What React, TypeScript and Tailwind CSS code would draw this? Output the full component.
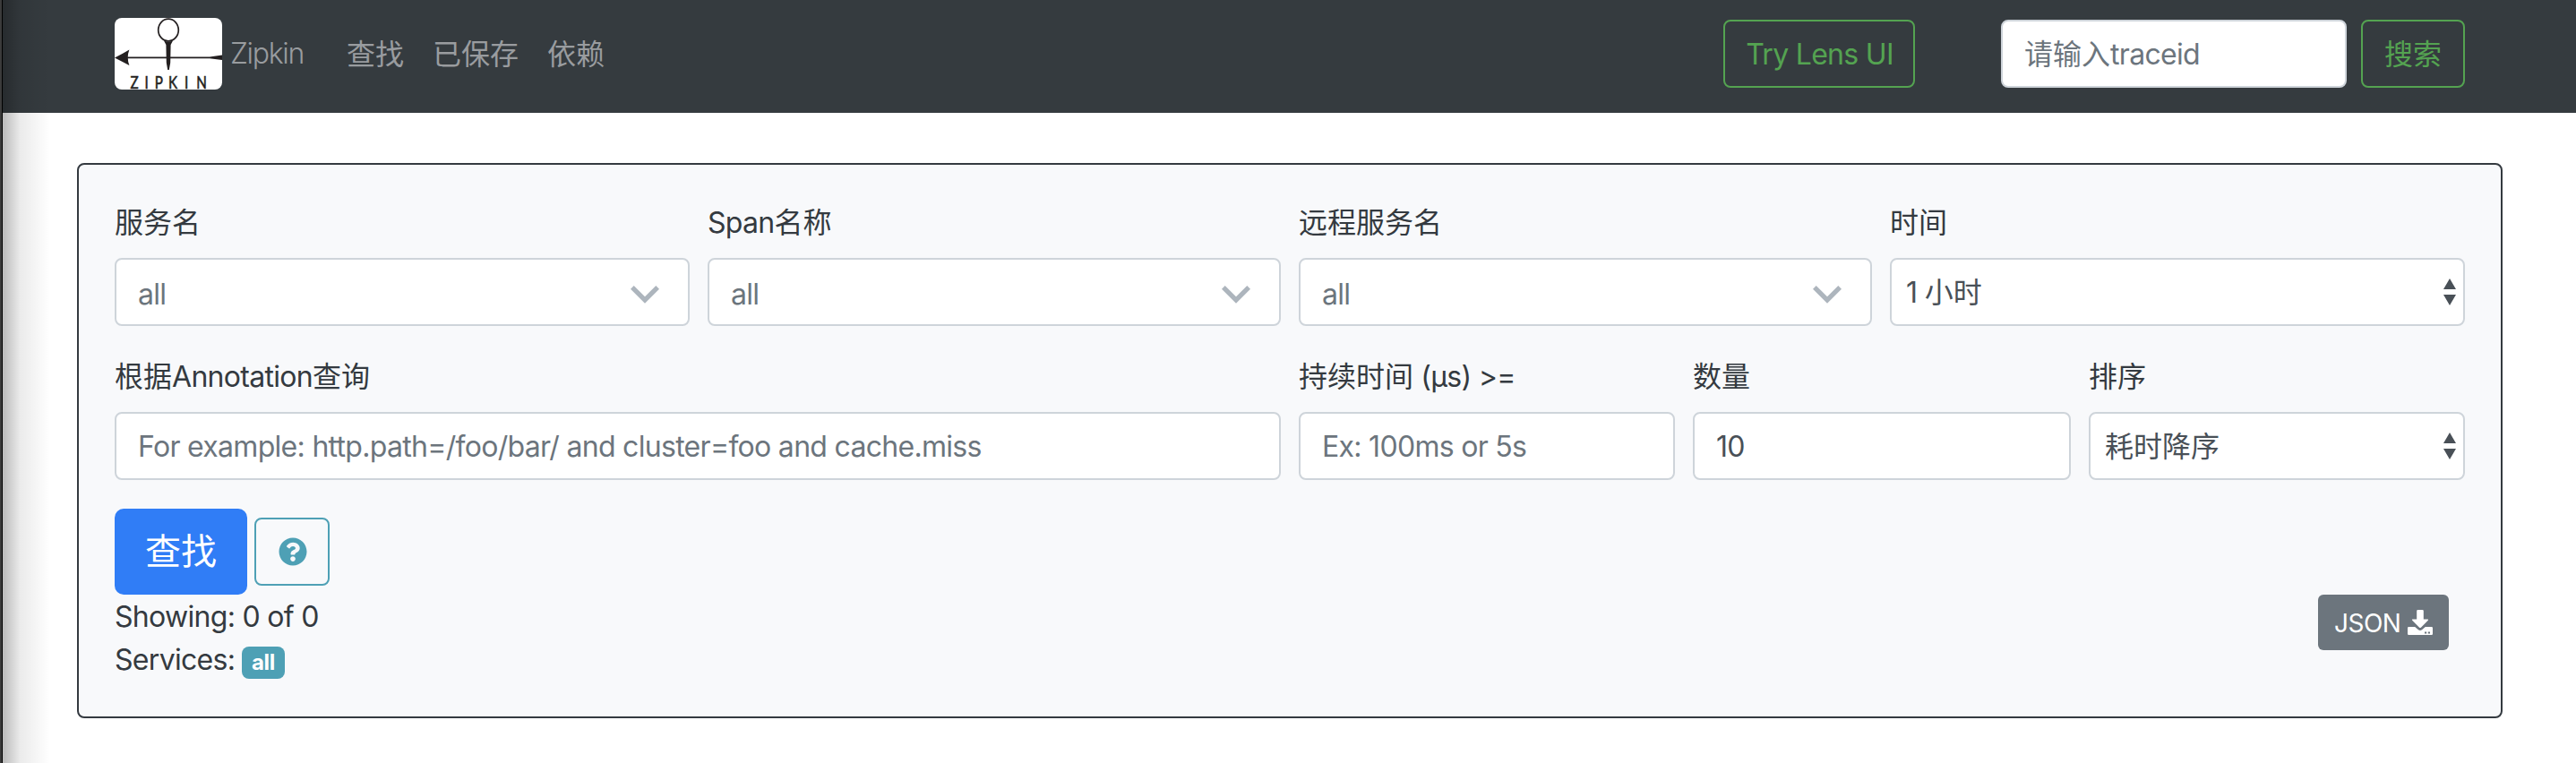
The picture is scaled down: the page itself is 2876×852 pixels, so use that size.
import { FaQuestionCircle } from "react-icons/fa";

/* Latin runs are set slightly tighter than the Chinese runs beside them. */
function T({ children }: { children: string }) {
  const runs = children.match(/[\u4e00-\u9fff]+|[^\u4e00-\u9fff]+/g) ?? [];
  return (
    <span className="whitespace-pre">
      {runs.map((run, i) => (
        <span key={i} className={/[\u4e00-\u9fff]/.test(run) ? "" : "tracking-[-0.7px]"}>
          {run}
        </span>
      ))}
    </span>
  );
}

function Label({ text }: { text: string }) {
  return (
    <label className="mb-4 block h-12 whitespace-nowrap pt-px">
      <T>{text}</T>
    </label>
  );
}

const box =
  "flex h-[76px] w-full items-center rounded-lg border-2 border-[#ced4da] bg-white";

function Chosen({ label }: { label: string }) {
  return (
    <div>
      <Label text={label} />
      <div className={`${box} justify-between pl-6 pr-8 text-[#6c757d]`}>
        <span className="pt-[6px]">
          <T>all</T>
        </span>
        <svg viewBox="0 0 32 20" className="mt-[5px] h-5 w-8" fill="#adb5bd">
          <path d="M0 3.700 3.700 0 16 12.300 28.300 0 32 3.700 16 19.700z" />
        </svg>
      </div>
    </div>
  );
}

function Select({ label, value }: { label: string; value: string }) {
  return (
    <div>
      <Label text={label} />
      <div className={`${box} justify-between pl-4 pr-2 text-[#495057]`}>
        <span className="pt-0.5">
          <T>{value}</T>
        </span>
        <svg viewBox="0 0 14 30" className="h-[30px] w-[14px]" fill="#495057">
          <path d="M0 12 7 0l7 12zM0 18h14L7 30z" />
        </svg>
      </div>
    </div>
  );
}

function Field({ label, value, filled }: { label: string; value: string; filled?: boolean }) {
  return (
    <div>
      <Label text={label} />
      <div className={`${box} px-6 pt-0.5 ${filled ? "text-[#495057]" : "text-[#6c757d]"}`}>
        <T>{value}</T>
      </div>
    </div>
  );
}

function Logo() {
  return (
    <svg viewBox="0 0 120 80" className="h-20 w-[120px] overflow-visible rounded-lg bg-white">
      <ellipse cx="60" cy="13.5" rx="11.3" ry="12.3" fill="none" stroke="#231f20" strokeWidth="1.7" />
      <path d="M55 25.5Q60 27.5 65 25.5L62.6 30 62.2 50 60.8 58H59.2L57.8 50 57.4 30Z" fill="#231f20" />
      <path d="M12 43.6H106L120 41.6V47L106 45.2H12Z" fill="#231f20" />
      <path d="M0 44.4Q9 40 16.4 35.5Q13 44 16.4 53Q9 49 0 44.4Z" fill="#231f20" />
      <text
        x="22 42 56 75 97.5 114"
        y="78.8"
        transform="scale(0.8 1)"
        className="font-['Lato',sans-serif] text-[19px]"
        fill="#231f20"
        stroke="#231f20"
        strokeWidth="0.6"
      >
        ZIPKIN
      </text>
    </svg>
  );
}

export default function App() {
  return (
    <div className="relative h-[852px] w-full overflow-hidden bg-white font-['Inter','Noto_Sans_CJK_SC',sans-serif] text-[32px] leading-[48px] text-[#343a40]">
      <nav className="flex h-[126px] items-start bg-[#353b3f] pl-32 pr-[124px] text-[#999c9f]">
        <div className="flex items-center pt-5">
          <Logo />
          <span className="ml-[9px] w-[130px] font-light tracking-[-1.3px]">Zipkin</span>
        </div>
        <div className="flex gap-8 pt-[37px]">
          <span>查找</span>
          <span>已保存</span>
          <span>依赖</span>
        </div>
        <div className="ml-auto flex pt-[22px]">
          <button className="mr-24 h-[76px] w-[214px] rounded-lg border-2 border-[#54a351] pl-px pt-0.5 text-[#54a351]">
            <T>Try Lens UI</T>
          </button>
          <div className="mr-4 flex h-[76px] w-[386px] items-center rounded-lg border-2 border-[#ced4da] bg-white pl-6 pt-0.5 text-[#6c757d]">
            <T>请输入traceid</T>
          </div>
          <button className="h-[76px] w-[116px] rounded-lg border-2 border-[#54a351] pt-0.5 text-[#54a351]">搜索</button>
        </div>
      </nav>

      <main className="ml-[86px] mr-[82px] mt-14 h-[620px] rounded-lg border-2 border-[#343a40] bg-[#f8f9fb] p-10">
        <div className="grid grid-cols-[642px_640px_640px_642px] gap-5">
          <Chosen label="服务名" />
          <Chosen label="Span名称" />
          <Chosen label="远程服务名" />
          <Select label="时间" value="1 小时" />
        </div>
        <div className="mt-8 grid grid-cols-[1302px_420px_422px_420px] gap-5">
          <Field label="根据Annotation查询" value="For example: http.path=/foo/bar/ and cluster=foo and cache.miss" />
          <Field label="持续时间 (μs) >=" value="Ex: 100ms or 5s" />
          <Field label="数量" value="10" filled />
          <Select label="排序" value="耗时降序" />
        </div>
        <div className="mt-8 flex items-center gap-2">
          <button className="h-24 w-[148px] rounded-[10px] bg-[#307df6] text-[40px] text-white">查找</button>
          <button className="flex h-[76px] w-[84px] items-center justify-center rounded-lg border-2 border-[#4ea0b5] pl-px text-[#4ea0b5]">
            <FaQuestionCircle size={32} />
          </button>
        </div>
        <div className="flex justify-between">
          <div className="pt-px">
            <div className="tracking-[-0.1px]">
              <T>Showing: 0 of 0</T>
            </div>
            <div className="flex">
              <span className="w-[142px]">
                <T>Services:</T>
              </span>
              <span className="mt-[9px] h-9 w-12 rounded-lg bg-[#4ea0b5] text-center text-2xl font-bold leading-[35px] tracking-[-0.3px] text-white">all</span>
            </div>
          </div>
          <button className="mr-[18px] flex h-[62px] w-[146px] items-center rounded-md bg-[#6c757d] pl-[18px] text-[28px] text-white">
            <span className="w-[82px] pt-0.5 text-left tracking-[-0.5px]">JSON</span>
            <svg viewBox="0 0 28 28" className="size-7" fill="currentColor">
              <path d="M11.5 0h5q1.3 0 1.3 1.3V10.500h4.400q1.500 0 .6 1.200l-7.900 8q-.9.8-1.800 0l-7.900-8q-.9-1.200.6-1.200h4.400V1.300Q10.200 0 11.500 0Z" />
              <path fillRule="evenodd" d="M1.300 19H8.200L12 22.200q2 1.500 4 0L19.800 19h6.900q1.300 0 1.300 1.300v6.400q0 1.300-1.300 1.300H1.300Q0 28 0 26.700v-6.400Q0 19 1.300 19ZM19 24.600h2.200v2H19zM22.800 24.600H25v2h-2.200z" />
            </svg>
          </button>
        </div>
      </main>
      <div className="pointer-events-none absolute inset-y-0 left-0 w-[56px] bg-gradient-to-r from-black/30 via-black/8 via-40% to-transparent" />
      <div className="absolute inset-y-0 left-0 w-[3px] border-r border-black bg-[#3c3c3c]" />
    </div>
  );
}
